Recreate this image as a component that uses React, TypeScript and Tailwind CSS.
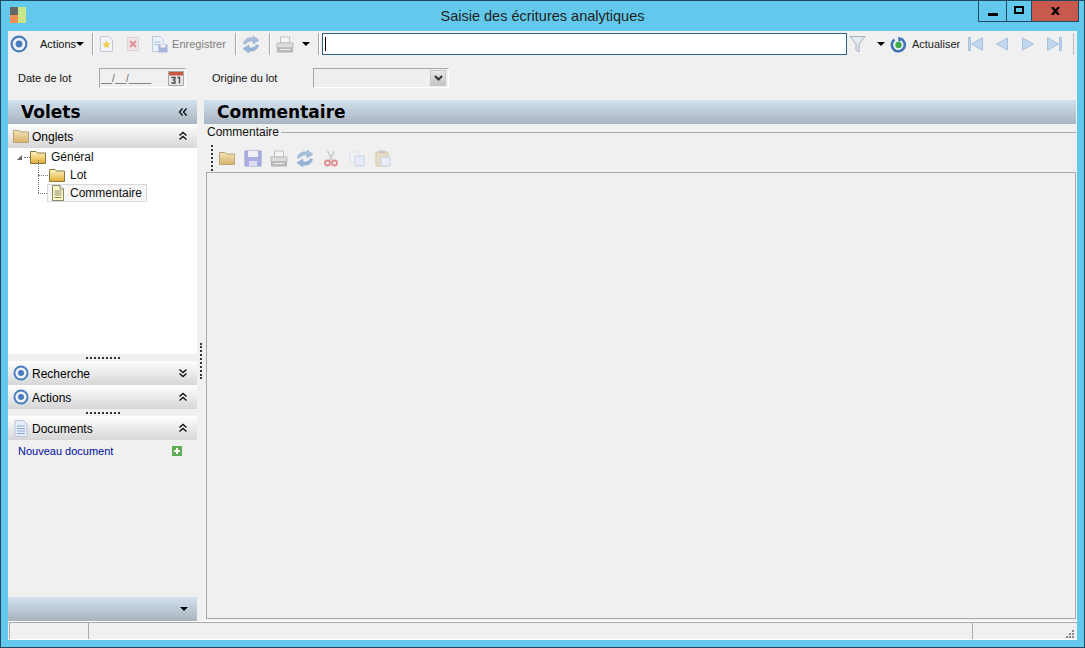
import React from 'react';

const Target = ({ size = 18 }: { size?: number }) => (
  <svg width={size} height={size} viewBox="0 0 18 18">
    <circle cx="9" cy="9" r="7.4" fill="#eef2f8" stroke="#4a7cbd" strokeWidth="2.2" />
    <circle cx="9" cy="9" r="3.4" fill="#4a7cbd" />
  </svg>
);

const Folder = ({ w = 16, tan }: { w?: number; tan?: boolean }) => (
  <svg width={w} height="14" viewBox="0 0 16 14">
    <defs>
      <linearGradient id="fold" x1="0" y1="0" x2="0" y2="1">
        <stop offset="0" stopColor="#fff6c4" />
        <stop offset="1" stopColor="#e3ab33" />
      </linearGradient>
      <linearGradient id="foldTan" x1="0" y1="0" x2="0" y2="1">
        <stop offset="0" stopColor="#f3e3b8" />
        <stop offset="1" stopColor="#d6b26a" />
      </linearGradient>
    </defs>
    <path d="M.5 1.500h5.500l1.500 1.500h8v10.500H.5z" fill={tan ? 'url(#foldTan)' : 'url(#fold)'} stroke={tan ? '#b9a477' : '#86763f'} />
  </svg>
);

const NotePage = () => (
  <svg width="14" height="16" viewBox="0 0 14 16">
    <path d="M1.500.500h7.500l3.500 3.500v11.500h-11z" fill="#fdf9c4" stroke="#85856c" />
    <path d="M9 .5v3.500h3.500" fill="#fff" stroke="#85856c" />
    <path d="M3.500 6h7M3.500 8h7M3.500 10h7M3.500 12.500h7" stroke="#8b8b70" />
  </svg>
);

const DocBlue = () => (
  <svg width="14" height="17" viewBox="0 0 14 17">
    <path d="M1 .5h8.500l3.500 3.500v12.500H1z" fill="#e8eef9" stroke="#b5c4dc" />
    <path d="M3 6h8M3 8.500h8M3 11h8M3 13.500h8" stroke="#86a6d8" />
  </svg>
);

const Chevrons = ({ up, left }: { up?: boolean; left?: boolean }) => (
  <svg width="10" height="10" viewBox="0 0 10 10" fill="none" stroke="#111" strokeWidth="1.4" className={left ? '-rotate-90' : ''}>
    {up ? <path d="M1.500 4.500 5 1.500l3.500 3M1.500 8.500 5 5.500l3.500 3" /> : <path d="M1.500 1.500 5 4.500l3.500-3M1.500 5.500 5 8.500l3.500-3" />}
  </svg>
);

const Caret = () => <span className="block w-0 h-0 border-l-[4px] border-r-[4px] border-t-[4px] border-l-transparent border-r-transparent border-t-black" />;

const Sep = () => <div className="w-px h-[22px] bg-[#a8a8a8] border-r border-white box-content" />;

const Sync = () => (
  <svg width="18" height="17" viewBox="0 0 18 17">
    <path d="M1.500 8C2 3.500 6.500.8 11 2.200V0l6 4.300-6 3.700V5.300C8 4.400 5 5.600 3.800 8z" fill="#a6bedb" stroke="#90a9c8" strokeWidth=".5" />
    <path d="M16.500 9c-.5 4.500-5 7.200-9.500 5.800V17L1 12.700 7 9v2.700c3 .9 6-.3 7.200-2.700z" fill="#95b5db" stroke="#82a0c4" strokeWidth=".5" />
  </svg>
);

const Printer = () => (
  <svg width="18" height="17" viewBox="0 0 18 17">
    <path d="M4.500 1h9v6h-9z" fill="#f5f5f5" stroke="#c0c0c0" />
    <path d="M1 7h16v5H1z" fill="#dcdcdc" stroke="#bbb" />
    <path d="M1.500 12h15v4h-15z" fill="#bebebe" stroke="#b0b0b0" />
    <path d="M4 13.500h10" stroke="#eee" />
  </svg>
);

const NavFirst = () => (
  <svg width="15" height="14" viewBox="0 0 15 14" fill="#c2d7f0" stroke="#a9c0dc">
    <path d="M.5.500h2v13h-2z" />
    <path d="M14.500.500v13L3.500 7z" />
  </svg>
);
const NavPrev = () => (
  <svg width="12" height="14" viewBox="0 0 12 14" fill="#c2d7f0" stroke="#a9c0dc"><path d="M11.500 1v12L.5 7z" /></svg>
);
const NavNext = () => (
  <svg width="12" height="14" viewBox="0 0 12 14" fill="#c2d7f0" stroke="#a9c0dc"><path d="M.5 1v12l11-6z" /></svg>
);
const NavLast = () => (
  <svg width="15" height="14" viewBox="0 0 15 14" fill="#c2d7f0" stroke="#a9c0dc">
    <path d="M.5.500v13l11-6.500z" />
    <path d="M12.500.500h2v13h-2z" />
  </svg>
);

const paneHead = 'flex items-center h-6 shrink-0 bg-gradient-to-b from-white to-[#d6d6d6]';
const blueHead = 'bg-gradient-to-b from-[#d3e1ee] to-[#a8b4c0]';
const headFont = "mt-px text-[17px] font-bold text-black font-['DejaVu_Sans',sans-serif]";

const Grip = () => (
  <div className="h-[7px] shrink-0 bg-[#f0f0f0] flex items-center justify-center gap-[2px] w-full">
    {Array.from({ length: 9 }).map((_, i) => <span key={i} className="w-[2px] h-[2px] bg-[#333]" />)}
  </div>
);

const Pane = ({ icon, title, up }: { icon: React.ReactNode; title: string; up?: boolean }) => (
  <div className={paneHead}>
    <span className="w-[24px] flex justify-center pl-[1px]">{icon}</span>
    <span className="text-[12px] text-black mt-px">{title}</span>
    <span className="ml-auto mr-[9px] flex"><Chevrons up={up} /></span>
  </div>
);

export default function App() {
  return (
    <div className="w-[1085px] h-[648px] bg-[#63c9ec] border border-[#1f4a60] flex flex-col overflow-hidden text-[11px] text-[#111] font-['Liberation_Sans',sans-serif]">
      {/* title bar */}
      <div className="h-[30px] shrink-0 flex">
        <div className="w-[106px] pl-[9px] pt-[6px]">
          <div className="w-4 h-4 flex">
            <div className="w-2 flex flex-col">
              <span className="h-2 bg-[#666]" />
              <span className="h-2 bg-[#ef9152]" />
            </div>
            <span className="w-2 bg-[#c9e58a]" />
          </div>
        </div>
        <div className="flex-1 text-center text-[14.500px] leading-[30px] text-[#222]">Saisie des écritures analytiques</div>
        <div className="w-[106px] flex justify-end pr-[5px]">
          <div className="flex h-[21px] border border-t-0 border-[#1f4a60]">
            <div className="w-[28px] flex items-center justify-center border-r border-[#1f4a60]"><span className="w-[10px] h-[3px] bg-black mt-[6px]" /></div>
            <div className="w-[25px] flex items-center justify-center border-r border-[#1f4a60]"><span className="w-[10px] h-[8px] border-2 border-black mb-[2px]" /></div>
            <div className="w-[46px] flex items-center justify-center bg-[#c75a4c]">
              <svg width="9" height="8" viewBox="0 0 9 8" stroke="#000" strokeWidth="2.200" className="mb-[1px]"><path d="M1 0l7 8M8 0 1 8" /></svg>
            </div>
          </div>
        </div>
      </div>

      {/* window body */}
      <div className="flex-1 mx-[7px] mb-[7px] bg-[#f0f0f0] flex flex-col min-h-0">
        {/* toolbar */}
        <div className="h-[26px] shrink-0 flex items-center pl-[2px]">
          <Target />
          <span className="ml-[12px]">Actions</span>
          <span className="ml-0"><Caret /></span>
          <span className="ml-[8px]"><Sep /></span>
          <svg className="ml-[5px]" width="15" height="16" viewBox="0 0 15 16">
            <path d="M1.500.500h8.500l3.500 3.500v11.500h-12z" fill="#f2f4fa" stroke="#c3c9d6" />
            <path d="M7.500 4.500l1.200 2.600 2.800.3-2.100 1.900.6 2.800-2.500-1.400-2.500 1.400.6-2.800-2.100-1.900 2.800-.3z" fill="#eccb4d" />
          </svg>
          <svg className="ml-[12px]" width="14" height="16" viewBox="0 0 14 16">
            <path d="M1.500 1.500h11v13h-11z" fill="#efe4e6" stroke="#dcd4d6" />
            <path d="M4 5l6 6M10 5l-6 6" stroke="#dd8e98" strokeWidth="2" />
          </svg>
          <svg className="ml-[12px]" width="16" height="17" viewBox="0 0 16 17">
            <path d="M.5.500h8l3 3v12h-11z" fill="#eaf0f8" stroke="#bccbdf" />
            <path d="M2.500 6h6M2.500 8.500h6" stroke="#a9bfdc" />
            <path d="M6.500 8.500h9v8h-9z" fill="#a9b4de" />
            <path d="M8.500 8.500h5v3h-5z" fill="#eee" />
          </svg>
          <span className="ml-[4px] text-[#7f7f7f]">Enregistrer</span>
          <span className="ml-[9px]"><Sep /></span>
          <span className="ml-[5px]"><Sync /></span>
          <span className="ml-[9px]"><Sep /></span>
          <span className="ml-[5px]"><Printer /></span>
          <span className="ml-[8px]"><Caret /></span>
          <span className="ml-[8px]"><Sep /></span>
          <div className="ml-[2px] w-[525px] h-[22px] bg-white border border-[#2d5f8e] flex items-center pl-[2px]"><span className="w-px h-[14px] bg-black" /></div>
          <svg className="ml-[2px]" width="18" height="18" viewBox="0 0 18 18" fill="#e4eaf1" stroke="#a4b0bc"><path d="M1 1.500h15l-6 7.500v8l-3-2v-6z" /></svg>
          <span className="ml-[10px]"><Caret /></span>
          <svg className="ml-[5px]" width="17" height="17" viewBox="0 0 17 17">
            <path d="M10 2.500a6.500 6.500 0 1 1-5.500 1" fill="none" stroke="#3f74b8" strokeWidth="2.600" />
            <path d="M8 .5l5 3-4.500 2.500z" fill="#3f74b8" />
            <circle cx="8.500" cy="9" r="3.200" fill="#3da94a" />
          </svg>
          <span className="ml-[5px] text-[#222]">Actualiser</span>
          <span className="ml-[8px]"><NavFirst /></span>
          <span className="ml-[13px]"><NavPrev /></span>
          <span className="ml-[14px]"><NavNext /></span>
          <span className="ml-[13px]"><NavLast /></span>
          <span className="ml-[11px] w-px h-[22px] bg-[#bbb]" />
        </div>

        {/* lot fields */}
        <div className="h-[43px] shrink-0 flex items-center pb-[1px]">
          <span className="ml-[10px] w-[81px]">Date de lot</span>
          <div className="w-[87px] h-[20px] bg-[#f0f0f0] border-l border-t border-r border-b border-l-[#a8a8a8] border-t-[#a8a8a8] border-r-white border-b-white flex items-center text-[10px] text-[#666] pl-px">
            __/__/____
            <svg className="ml-auto mr-[1px]" width="16" height="16" viewBox="0 0 16 16">
              <path d="M.5 1.500h15v14h-15z" fill="#e6e6e6" stroke="#aaa" />
              <path d="M1 2h14v3.500H1z" fill="#c9563f" />
              <path d="M3.500 7.500h3.500v1.500l-1.500 1 1.500 1v2h-3.500M9.500 7.500h2v6" fill="none" stroke="#444" strokeWidth="1.300" />
            </svg>
          </div>
          <span className="ml-[26px] w-[101px]">Origine du lot</span>
          <div className="w-[136px] h-[20px] bg-[#efefef] border-l border-t border-r border-b border-l-[#a8a8a8] border-t-[#a8a8a8] border-r-white border-b-white flex items-center justify-end pr-[2px]">
            <span className="w-[16px] h-[16px] bg-gradient-to-b from-[#e8e8e8] to-[#c4c4c4] border border-[#c8c8c8] flex items-center justify-center">
              <svg width="9" height="6" viewBox="0 0 9 6" fill="none" stroke="#333" strokeWidth="2"><path d="M1 1l3.500 3.500L8 1" /></svg>
            </span>
          </div>
        </div>

        {/* main area */}
        <div className="flex-1 flex min-h-0">
          {/* left panel */}
          <div className="w-[189px] shrink-0 flex flex-col">
            <div className={`h-[24px] shrink-0 flex items-center ${blueHead}`}>
              <span className={`ml-[13px] ${headFont}`}>Volets</span>
              <span className="ml-auto mr-[9px] flex"><Chevrons up left /></span>
            </div>
            <Pane icon={<Folder tan />} title="Onglets" up />
            <div className="h-[206px] shrink-0 bg-white relative text-[12px]">
              {/* tree lines */}
              <div className="absolute left-[30px] top-[12px] h-[33px] border-l border-dotted border-[#777]" />
              <div className="absolute left-[16px] top-[9px] w-[6px] border-t border-dotted border-[#777]" />
              <div className="absolute left-[30px] top-[27px] w-[10px] border-t border-dotted border-[#777]" />
              <div className="absolute left-[30px] top-[45px] w-[9px] border-t border-dotted border-[#777]" />
              <div className="flex items-center h-[18px]">
                <span className="ml-[9px] w-0 h-0 border-l-[5px] border-b-[5px] border-l-transparent border-b-[#666]" />
                <span className="ml-[8px] flex"><Folder /></span>
                <span className="ml-[5px]">Général</span>
              </div>
              <div className="flex items-center h-[18px]">
                <span className="ml-[41px] flex"><Folder /></span>
                <span className="ml-[5px]">Lot</span>
              </div>
              <div className="flex items-center h-[18px] ml-[39px] w-[100px] bg-[#f6f6f6] border border-[#d9d9d9]">
                <span className="ml-[3px] flex"><NotePage /></span>
                <span className="ml-[5px]">Commentaire</span>
              </div>
            </div>
            <Grip />
            <Pane icon={<Target size={16} />} title="Recherche" />
            <Pane icon={<Target size={16} />} title="Actions" up />
            <Grip />
            <Pane icon={<DocBlue />} title="Documents" up />
            <div className="flex-1 flex items-start pt-[3px] bg-[#f0f0f0]">
              <span className="ml-[10px] text-[#000d9c]">Nouveau document</span>
              <svg className="ml-auto mr-[15px] mt-[3px]" width="10" height="10" viewBox="0 0 10 10">
                <path d="M0 0h10v10H0z" fill="#5cad55" />
                <path d="M5 2v6M2 5h6" stroke="#fff" strokeWidth="2" />
              </svg>
            </div>
            <div className={`h-[24px] shrink-0 flex items-center justify-end pr-[9px] ${blueHead}`}><Caret /></div>
          </div>

          {/* splitter */}
          <div className="w-[7px] shrink-0 relative">
            <div className="absolute left-[3px] top-[243px] h-[36px] border-l-2 border-dotted border-[#333]" />
          </div>

          {/* right panel */}
          <div className="flex-1 flex flex-col pb-[2px] pr-[1px]">
            <div className={`h-[24px] shrink-0 flex items-center pl-[13px] ${blueHead}`}>
              <span className={headFont}>Commentaire</span>
            </div>
            <div className="flex-1 flex flex-col ml-[2px] min-h-0">
              <div className="h-[14px] shrink-0 flex items-center text-[12px]">
                <span className="pl-px mt-px">Commentaire</span>
                <span className="flex-1 h-px bg-[#a9a9a9] ml-[2px] mt-[2px]" />
              </div>
              <div className="h-[34px] shrink-0 flex items-center gap-[8px] relative pl-[12px] pt-[6px]">
                <span className="absolute left-[5px] top-[7px] h-[26px] border-l-2 border-dotted border-[#333]" />
                <Folder w={18} tan />
                <svg width="18" height="17" viewBox="0 0 18 17"><path d="M1 1h16v15H1z" fill="#a9aee0" stroke="#9a9fd4" /><path d="M4 1h10v6H4z" fill="#efeff5" /><path d="M5 11h8v5H5z" fill="#dcdcf0" /></svg>
                <Printer />
                <Sync />
                <svg width="18" height="17" viewBox="0 0 18 17" fill="none">
                  <path d="M5.500 1l5 9M12.500 1l-5 9" stroke="#c9c9c9" strokeWidth="1.500" />
                  <circle cx="5.500" cy="13" r="2.500" stroke="#df8d8d" strokeWidth="1.800" />
                  <circle cx="12.500" cy="13" r="2.500" stroke="#df8d8d" strokeWidth="1.800" />
                </svg>
                <svg width="18" height="17" viewBox="0 0 18 17"><path d="M2 2h9v10H2z" fill="#f2f4f8" stroke="#dde2ea" /><path d="M7 6h9v10H7z" fill="#e6ecf7" stroke="#c8d4e8" /></svg>
                <svg width="18" height="17" viewBox="0 0 18 17"><path d="M2 2h12v14H2z" fill="#e8dcc4" stroke="#d5c7a9" /><path d="M7 7h9v9H7z" fill="#e8edf7" stroke="#c4d1e6" /><path d="M5 .5h6v3H5z" fill="#c9c9c9" /></svg>
              </div>
              <div className="flex-1 bg-[#f0f0f0] border border-[#a9a9a9]" />
            </div>
          </div>
        </div>

        {/* status bar */}
        <div className="h-[19px] shrink-0 flex border-t border-b border-white relative">
          <div className="w-[79px] ml-[1px] border-l border-t border-[#a9a9a9]" />
          <div className="flex-1 border-l border-t border-[#a9a9a9]" />
          <div className="w-[105px] border-l border-t border-[#a9a9a9]" />
          <div className="absolute right-[3px] bottom-[1px] grid grid-cols-3 gap-[1px]">
            <span /><span /><span className="w-[2px] h-[2px] bg-[#888]" />
            <span /><span className="w-[2px] h-[2px] bg-[#888]" /><span className="w-[2px] h-[2px] bg-[#888]" />
            <span className="w-[2px] h-[2px] bg-[#888]" /><span className="w-[2px] h-[2px] bg-[#888]" /><span className="w-[2px] h-[2px] bg-[#888]" />
          </div>
        </div>
      </div>
    </div>
  );
}
